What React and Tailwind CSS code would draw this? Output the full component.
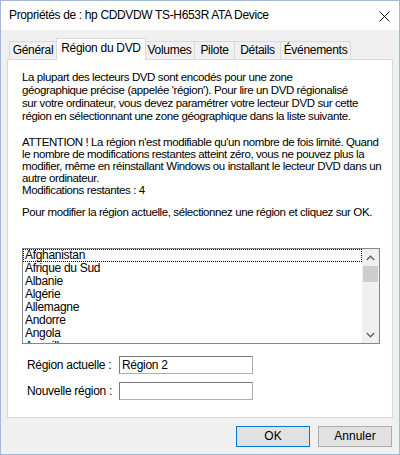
import { useState } from "react";

const pays = [
  "Afghanistan",
  "Afrique du Sud",
  "Albanie",
  "Algérie",
  "Allemagne",
  "Andorre",
  "Angola",
  "Anguilla",
];

const onglets = [
  { label: "Général", w: "w-[48px]" },
  { label: "Région du DVD", w: "w-[90px]" },
  { label: "Volumes", w: "w-[50px]" },
  { label: "Pilote", w: "w-[40px]" },
  { label: "Détails", w: "w-[46px]" },
  { label: "Événements", w: "w-[70px]" },
];

function App() {
  const [ongletActif] = useState(1);
  const [selection] = useState(0);

  return (
    <div
      className="w-[400px] h-[455px] flex flex-col bg-[#f0f0f0] border border-[#9fbbdc] text-black text-[12px] leading-[13px] overflow-hidden"
      style={{ fontFamily: '"Liberation Sans", Arial, sans-serif' }}
    >
      {/* BARRE DE TITRE */}
      <div className="h-[29px] shrink-0 bg-white flex items-center justify-between pl-[8px] pr-[9px]">
        <span className="text-[12px] tracking-[-0.35px] whitespace-nowrap">
          Propriétés de : hp CDDVDW TS-H653R ATA Device
        </span>
        <svg width="11" height="11" viewBox="0 0 11 11" className="mt-[1px]">
          <path d="M0.5 0.5 L10.5 10.5 M10.5 0.5 L0.5 10.5" stroke="#111" strokeWidth="1" />
        </svg>
      </div>

      {/* ONGLETS */}
      <div className="pl-[8px] pt-[8px] flex items-end h-[29px] shrink-0 tracking-[-0.3px] whitespace-nowrap">
        {onglets.map((o, i) =>
          i === ongletActif ? (
            <div
              key={o.label}
              className={`${o.w} h-[22px] -mx-[1px] relative z-10 bg-white border border-b-0 border-[#d9d9d9] flex items-start justify-center pt-[3px] -mb-[1px]`}
            >
              {o.label}
            </div>
          ) : (
            <div
              key={o.label}
              className={`${o.w} h-[18px] bg-[#f0f0f0] border border-b-0 border-l-0 first:border-l border-[#d9d9d9] flex items-center justify-center`}
            >
              {o.label}
            </div>
          ),
        )}
      </div>

      {/* PANNEAU */}
      <div className="mx-[6px] h-[359px] shrink-0 bg-white border border-[#d9d9d9] pl-[14px] pr-[4px] pt-[11px] text-[11.5px] tracking-[-0.4px] whitespace-nowrap">
        <p>
          La plupart des lecteurs DVD sont encodés pour une zone
          <br />
          géographique précise (appelée 'région'). Pour lire un DVD régionalisé
          <br />
          sur votre ordinateur, vous devez paramétrer votre lecteur DVD sur cette
          <br />
          région en sélectionnant une zone géographique dans la liste suivante.
        </p>

        <p className="mt-[13px] leading-[12px]">
          ATTENTION ! La région n'est modifiable qu'un nombre de fois limité. Quand
          <br />
          le nombre de modifications restantes atteint zéro, vous ne pouvez plus la
          <br />
          modifier, même en réinstallant Windows ou installant le lecteur DVD dans un
          <br />
          autre ordinateur.
        </p>
        <p className="leading-[12px]">Modifications restantes : 4</p>

        <p className="mt-[10px]">
          Pour modifier la région actuelle, sélectionnez une région et cliquez sur OK.
        </p>

        {/* LISTE DES PAYS */}
        <div className="mt-[29px] w-[358px] h-[96px] border border-[#828790] flex overflow-hidden text-[12px] tracking-[-0.3px]">
          <div className="flex-1 overflow-hidden">
            {pays.map((p, i) => (
              <div
                key={p}
                className={`h-[13px] pl-[2px] ${
                  i === selection ? "outline outline-1 outline-dotted outline-black -outline-offset-1" : ""
                }`}
              >
                {p}
              </div>
            ))}
          </div>

          {/* BARRE DE DEFILEMENT */}
          <div className="w-[17px] bg-[#f0f0f0] flex flex-col">
            <div className="h-[17px] flex items-center justify-center">
              <svg width="9" height="6" viewBox="0 0 9 6">
                <path d="M0.8 5 L4.5 1.2 L8.2 5" fill="none" stroke="#606060" strokeWidth="1.3" />
              </svg>
            </div>
            <div className="h-[16px] mx-[1px] bg-[#cdcdcd]" />
            <div className="flex-1" />
            <div className="h-[17px] flex items-center justify-center">
              <svg width="9" height="6" viewBox="0 0 9 6">
                <path d="M0.8 1 L4.5 4.8 L8.2 1" fill="none" stroke="#606060" strokeWidth="1.3" />
              </svg>
            </div>
          </div>
        </div>

        {/* CHAMPS */}
        <div className="mt-[12px] ml-[5px] flex items-center text-[12px] tracking-[-0.3px]">
          <span className="w-[92px]">Région actuelle :</span>
          <div className="w-[134px] h-[18px] border border-[#abadb3] border-t-[#7a7a7a] border-l-[#7a7a7a] bg-white pl-[2px] flex items-center">
            Région 2
          </div>
        </div>
        <div className="mt-[8px] ml-[5px] flex items-center text-[12px] tracking-[-0.3px]">
          <span className="w-[92px]">Nouvelle région :</span>
          <div className="w-[134px] h-[18px] border border-[#abadb3] border-t-[#7a7a7a] border-l-[#7a7a7a] bg-white" />
        </div>
      </div>

      {/* BOUTONS */}
      <div className="flex justify-end gap-[8px] pr-[7px] pt-[8px]">
        <button className="w-[74px] h-[21px] bg-[#e1e1e1] border border-[#0078d7] text-[12px] text-black">
          OK
        </button>
        <button className="w-[74px] h-[21px] bg-[#e1e1e1] border border-[#adadad] text-[12px] text-black">
          Annuler
        </button>
      </div>
    </div>
  );
}

export default App;
